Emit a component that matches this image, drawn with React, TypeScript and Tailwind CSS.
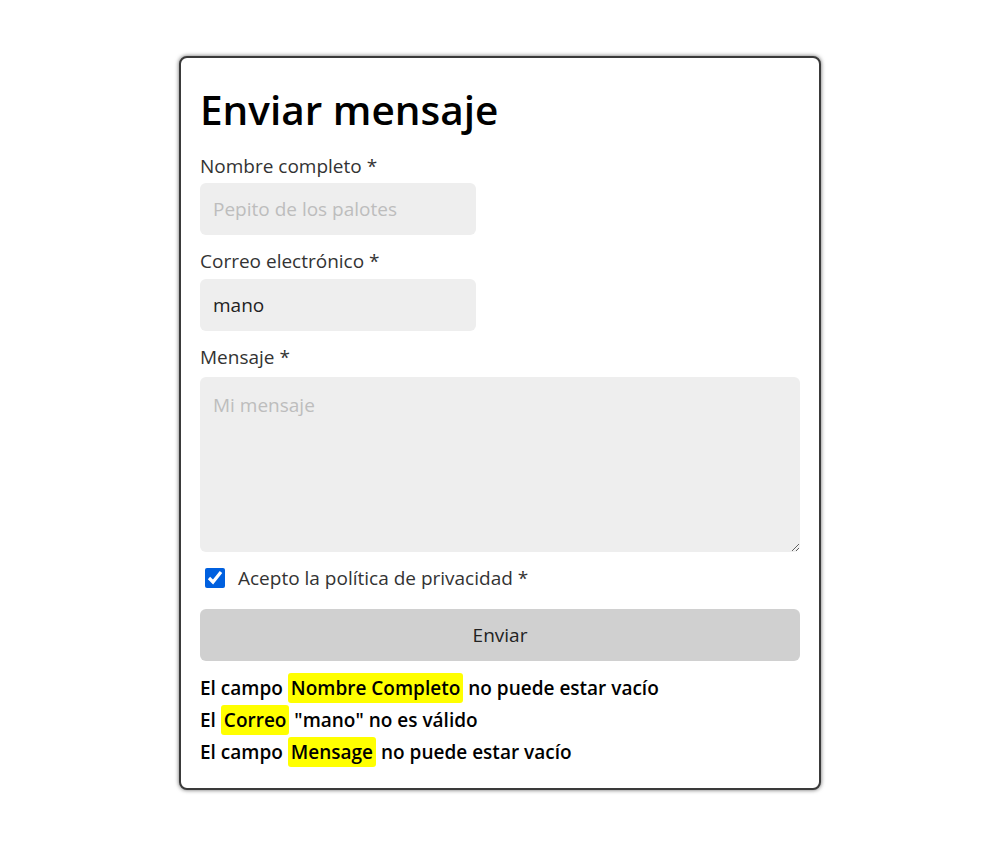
import { useState } from "react";

function Mark({ children }: { children: React.ReactNode }) {
  return <span className="rounded-[3px] bg-[#ffff00] px-[3px] py-[2px]">{children}</span>;
}

export default function App() {
  const [agree, setAgree] = useState(true);

  return (
    <div
      className="min-h-screen bg-white pt-[56px]"
      style={{ fontFamily: '"Open Sans", "Noto Sans", sans-serif' }}
    >
      <form
        className="mx-auto w-[642px] rounded-lg border-2 border-[#3a3a3a] bg-white px-[19px] pb-[20px] pt-[26px] shadow-[0_0_4px_rgba(0,0,0,0.6)]"
        onSubmit={(e) => e.preventDefault()}
      >
        <h1 className="text-[40.5px] font-semibold leading-[52px] text-black">Enviar mensaje</h1>

        <label className="mt-[17px] block text-[19px] leading-[27px] text-[#333]">Nombre completo *</label>
        <input
          className="mt-[3px] block h-[52px] w-[276px] rounded-md bg-[#eeeeee] px-[13px] text-[19px] text-[#222] outline-none placeholder:text-[#bdbdbd]"
          placeholder="Pepito de los palotes"
        />

        <label className="mt-[13px] block text-[19px] leading-[27px] text-[#333]">Correo electrónico *</label>
        <input
          className="mt-[4px] block h-[52px] w-[276px] rounded-md bg-[#eeeeee] px-[13px] text-[19px] text-[#222] outline-none"
          defaultValue="mano"
        />

        <label className="mt-[13px] block text-[19px] leading-[27px] text-[#333]">Mensaje *</label>
        <textarea
          className="mt-[6px] block h-[175px] w-full rounded-md bg-[#eeeeee] px-[13px] py-[14px] text-[19px] text-[#222] outline-none placeholder:text-[#bdbdbd]"
          placeholder="Mi mensaje"
        />

        <div className="mt-[14px] flex items-center gap-[13px] pl-[5px]">
          <input
            type="checkbox"
            checked={agree}
            onChange={() => setAgree(!agree)}
            className="h-5 w-5 accent-[#0060df]"
          />
          <span className="text-[19px] leading-[24px] text-[#333]">Acepto la política de privacidad *</span>
        </div>

        <button className="mt-[19px] block h-[52px] w-full rounded-md bg-[#d0d0d0] text-[19px] text-[#222]">
          Enviar
        </button>

        <div className="mt-[11px] text-[19px] font-semibold leading-[32px] text-black">
          <p>
            El campo <Mark>Nombre Completo</Mark> no puede estar vacío
          </p>
          <p>
            El <Mark>Correo</Mark> "mano" no es válido
          </p>
          <p>
            El campo <Mark>Mensage</Mark> no puede estar vacío
          </p>
        </div>
      </form>
    </div>
  );
}
